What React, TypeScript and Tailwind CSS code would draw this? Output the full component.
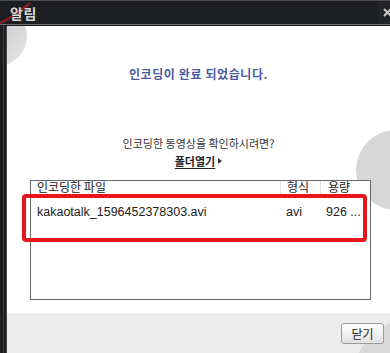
import React from "react";

const KR = { fontFamily: '"Noto Sans CJK KR", "Noto Sans", sans-serif' };
const ROW = { fontFamily: '"Liberation Sans", "Noto Sans CJK KR", sans-serif' };

export default function App() {
  return (
    <div className="w-[390px] h-[353px] relative overflow-hidden bg-[#1d1e21] flex flex-col" style={KR}>
      {/* title bar */}
      <div className="h-[24px] border-t border-[#4e4e50] relative flex items-center pl-[10px] shrink-0">
        <svg className="absolute left-0 top-0" width="40" height="26" viewBox="0 0 40 26">
          <path d="M0 22 Q 14 16 30 2" stroke="#a81d27" strokeWidth="2.5" fill="none" opacity="0.75" />
        </svg>
        <span className="relative text-[14px] font-bold text-[#d6d6d6] leading-none tracking-[0.5px]">알림</span>
        <div className="absolute right-0 top-0 w-[13px] h-[23px] bg-[#222326] flex items-center justify-end">
          <svg width="9" height="9" viewBox="0 0 9 9" className="mr-[-2px]">
            <path d="M1 1 L8 8 M8 1 L1 8" stroke="#c8c8c8" strokeWidth="2" />
          </svg>
        </div>
      </div>
      <div className="h-px bg-[#6b6b6d] shrink-0" />
      <div className="h-px bg-[#1d1e21] shrink-0" />
      {/* body */}
      <div className="flex-1 flex min-h-0">
        <div className="w-[7px] flex shrink-0">
          <div className="w-[3px]" />
          <div className="w-px bg-[#3a3b3e]" />
          <div className="w-[2px]" />
          <div className="w-px bg-[#4a4a4c]" />
        </div>
        <div className="flex-1 flex flex-col bg-white relative overflow-hidden">
          <div className="flex-1 flex flex-col relative">
            <div className="absolute left-[-40px] top-[-20px] w-[60px] h-[60px] rounded-full bg-gradient-to-br from-[#bdbdbd] to-[#e6e6e6]" />
            <div className="absolute right-[-46px] top-[104px] w-[80px] h-[80px] rounded-full bg-[#d7d7d7]" />
            <div className="relative pt-[40px] text-center text-[12px] font-bold text-[#4b5a9e] leading-[16px] tracking-[0.6px]">
              인코딩이 완료 되었습니다.
            </div>
            <div className="relative mt-[53px] text-center text-[11px] text-[#333] leading-[16px]">
              인코딩한 동영상을 확인하시려면?
            </div>
            <div className="relative mt-[2px] flex justify-center items-center gap-[3px] leading-[16px]">
              <span className="text-[11px] font-bold text-[#222] underline underline-offset-2">폴더열기</span>
              <svg width="4" height="6" viewBox="0 0 4 6"><path d="M0 0 L4 3 L0 6 Z" fill="#333" /></svg>
            </div>
            <div className="relative mt-[11px] ml-[23px] w-[341px] h-[120px] border border-[#666] bg-white overflow-hidden">
              <div className="h-[16px] grid grid-cols-[249px_40px_1fr] text-[12px] text-[#222] leading-[16px]">
                <div className="pl-[6px] -mt-[2px]">인코딩한 파일</div>
                <div className="pl-[6px] -mt-[2px] border-l border-[#e2e2e2]">형식</div>
                <div className="pl-[7px] -mt-[2px] border-l border-[#e2e2e2]">용량</div>
              </div>
              <div className="h-[29px] grid grid-cols-[249px_40px_1fr] items-center text-[12.5px] text-[#222] mt-[1px]" style={ROW}>
                <div className="pl-[6px]">kakaotalk_1596452378303.avi</div>
                <div className="pl-[6px]">avi</div>
                <div className="pl-[6px]">926 ...</div>
              </div>
            </div>
          </div>
          <div className="h-[40px] bg-[#ececec] border-t border-[#f3f3f3] relative overflow-hidden flex items-center justify-end pr-[6px] shrink-0">
            <div className="absolute left-[340px] top-[0px] w-[160px] h-[160px] rounded-full bg-[#d9d9d9]" />
            <button className="relative w-[43px] h-[21px] rounded-[3px] border border-[#9a9a9a] bg-gradient-to-b from-white to-[#e2e2e2] text-[12px] text-[#222] leading-none">
              닫기
            </button>
          </div>
        </div>
      </div>
      {/* annotation */}
      <div className="absolute left-[22px] top-[194px] w-[345px] h-[48px] border-4 border-[#e8151c] rounded-[4px]" />
    </div>
  );
}
